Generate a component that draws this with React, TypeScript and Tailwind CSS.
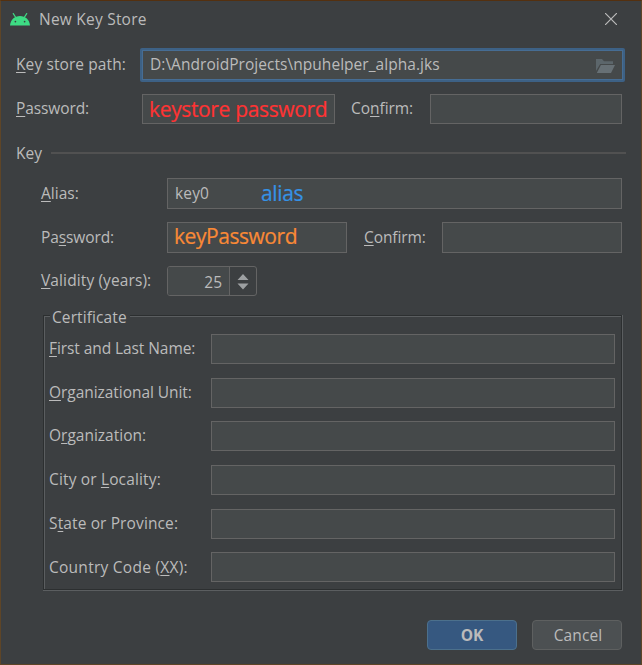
import type { ReactNode } from "react";

function Label({ className = "", children }: { className?: string; children: ReactNode }) {
  return <div className={`h-5 shrink-0 whitespace-pre text-[15.5px] leading-5 ${className}`}>{children}</div>;
}

function M({ children }: { children: ReactNode }) {
  return (
    <span className="underline decoration-1 underline-offset-2 [text-decoration-skip-ink:none]">{children}</span>
  );
}

function Field({ className = "", children }: { className?: string; children?: ReactNode }) {
  return <div className={`flex shrink-0 border border-[#646464] bg-[#45494a] ${className}`}>{children}</div>;
}

function Note({ className = "", children }: { className?: string; children: ReactNode }) {
  return (
    <span className={`whitespace-pre text-[21px] [-webkit-text-stroke:0.2px_currentColor] ${className}`}>
      {children}
    </span>
  );
}

function AndroidIcon() {
  return (
    <svg width="20" height="13" viewBox="0 0 20 13" className="shrink-0">
      <path d="M5.600 4.200 3.300.6M14.400 4.200 16.700.6" stroke="#3ddc84" strokeWidth="1.200" strokeLinecap="round" />
      <path d="M0 12.600C.5 6.600 4.600 3 10 3s9.500 3.600 10 9.600z" fill="#3ddc84" />
      <circle cx="5.400" cy="8.600" r=".85" fill="#3c3f41" />
      <circle cx="14.600" cy="8.600" r=".85" fill="#3c3f41" />
    </svg>
  );
}

function FolderIcon() {
  return (
    <svg width="19" height="14" viewBox="0 0 19 14" className="shrink-0">
      <path d="M0 0h6l2 2.300h9V5H4.200L0 12z" fill="#5c666b" />
      <path d="M4.900 6H19l-4 8H.8z" fill="#677075" />
    </svg>
  );
}

export default function App() {
  return (
    <div className="flex h-[665px] w-[642px] flex-col overflow-hidden border border-[#5e4527] border-t-[#54300f] bg-[#3c3f41] font-['Open_Sans','Noto_Sans',sans-serif] text-[#bbbbbb]">
      <header className="flex h-[47px] shrink-0 pl-[9px]">
        <div className="pt-3">
          <AndroidIcon />
        </div>
        <Label className="ml-[9px] mt-2 tracking-[0.22px]">New Key Store</Label>
        <svg width="12" height="12" viewBox="0 0 12 12" className="ml-auto mr-[24px] mt-3">
          <path d="M0 0 12 12M12 0 0 12" stroke="#bbbbbb" strokeWidth="1.200" />
        </svg>
      </header>

      <div className="flex h-[34px] shrink-0 pl-[15px]">
        <Label className="mt-[6px] w-[124px] tracking-[0.1px]">
          <M>K</M>ey store path:
        </Label>
        <div className="h-[34px] w-[485px] rounded-[2px] bg-[#3d6185] p-[2px]">
          <div className="flex h-[30px] border border-[#466d94] bg-[#45494a] pl-[7px]">
            <Label className="mt-[3px] tracking-[0.04px]">D:\AndroidProjects\npuhelper_alpha.jks</Label>
            <div className="ml-auto mr-[7px] mt-2">
              <FolderIcon />
            </div>
          </div>
        </div>
      </div>

      <div className="mt-3 flex h-[30px] shrink-0 pl-[15px]">
        <Label className="mt-1 w-[126px] tracking-[-0.1px]">
          <M>P</M>assword:
        </Label>
        <Field className="h-[30px] w-[193px] pl-[6px]">
          <Note className="leading-[29px] tracking-[-0.35px] text-[#ff3333]">keystore password</Note>
        </Field>
        <Label className="ml-4 mt-1 w-[79px] tracking-[-0.05px]">
          Co<M>n</M>firm:
        </Label>
        <Field className="h-[30px] w-[192px]" />
      </div>

      <div className="mt-[19px] flex h-5 shrink-0 pl-[15px]">
        <Label className="w-[35px]">Key</Label>
        <div className="mt-[9px] h-[2px] w-[575px] bg-[#515151]" />
      </div>

      <div className="mt-[15px] flex h-[31px] shrink-0 pl-10">
        <Label className="mt-[5px] w-[126px]">
          <M>A</M>lias:
        </Label>
        <Field className="h-[31px] w-[455px] pl-[7px]">
          <Label className="mt-1 w-[86px] tracking-[0.15px]">key0</Label>
          <Note className="leading-[29px] tracking-[-0.35px] text-[#3592e6]">alias</Note>
        </Field>
      </div>

      <div className="mt-[13px] flex h-[31px] shrink-0 pl-10">
        <Label className="mt-[5px] w-[126px] tracking-[-0.1px]">
          Pa<M>s</M>sword:
        </Label>
        <Field className="h-[31px] w-[180px] pl-[6px]">
          <Note className="leading-[26px] tracking-[-0.45px] text-[#fa8936]">keyPassword</Note>
        </Field>
        <Label className="ml-[17px] mt-[5px] w-[78px] tracking-[-0.1px]">
          <M>C</M>onfirm:
        </Label>
        <Field className="h-[31px] w-[180px]" />
      </div>

      <div className="mt-[13px] flex h-[30px] shrink-0 pl-10">
        <Label className="mt-1 w-[126px] tracking-[0.11px]">
          <M>V</M>alidity (years):
        </Label>
        <div className="flex h-[30px] w-[90px] overflow-hidden rounded-[3px] border border-[#646464]">
          <div className="flex w-[62px] justify-end border-r border-[#646464] bg-[#45494a] pr-[7px]">
            <Label className="mt-[5px]">25</Label>
          </div>
          <svg width="26" height="28" viewBox="0 0 26 28">
            <path d="M7.500 13 13 7l5.500 6zM7.500 16.500h11L13 22.500z" fill="#9da0a2" />
          </svg>
        </div>
      </div>

      <div className="mt-[10px] flex h-5 shrink-0 pl-[42px]">
        <div className="mt-[9px] h-[11px] w-[7px] border-l border-t border-[#2c2f30]">
          <div className="h-[10px] border-l border-t border-[#5b5e60]" />
        </div>
        <Label className="ml-[2px] mt-px w-[78px] tracking-[0.1px]">Certificate</Label>
        <div className="mt-[9px] h-[11px] w-[492px] border-r border-t border-[#2c2f30]">
          <div className="h-[10px] border-t border-[#5b5e60]" />
        </div>
        <div className="mt-[9px] h-[11px] w-px bg-[#5b5e60]" />
      </div>
      <div className="ml-[42px] h-[265px] w-[580px] shrink-0 border-b border-r border-[#5b5e60]">
        <div className="h-[264px] border-x border-b border-[#2c2f30]">
          <div className="flex h-[263px] flex-col gap-[13.700px] border-l border-[#5b5e60] pl-1 pt-2">
            <div className="flex h-[30px] shrink-0">
              <Label className="mt-1 w-[162px] tracking-[-0.08px]">
                <M>F</M>irst and Last Name:
              </Label>
              <Field className="w-[404px]" />
            </div>
            <div className="flex h-[30px] shrink-0">
              <Label className="mt-1 w-[162px] tracking-[-0.05px]">
                <M>O</M>rganizational Unit:
              </Label>
              <Field className="w-[404px]" />
            </div>
            <div className="flex h-[30px] shrink-0">
              <Label className="mt-1 w-[162px]">
                O<M>r</M>ganization:
              </Label>
              <Field className="w-[404px]" />
            </div>
            <div className="flex h-[30px] shrink-0">
              <Label className="mt-1 w-[162px] tracking-[0.15px]">
                City or <M>L</M>ocality:
              </Label>
              <Field className="w-[404px]" />
            </div>
            <div className="flex h-[30px] shrink-0">
              <Label className="mt-1 w-[162px] tracking-[0.12px]">
                S<M>t</M>ate or Province:
              </Label>
              <Field className="w-[404px]" />
            </div>
            <div className="flex h-[30px] shrink-0">
              <Label className="mt-[5px] w-[162px] tracking-[0.26px]">
                Country Code (<M>X</M>X):
              </Label>
              <Field className="w-[404px]" />
            </div>
          </div>
        </div>
      </div>

      <footer className="mt-[29px] flex h-[30px] shrink-0 justify-end gap-[15px] pr-[19px]">
        <button className="flex w-[90px] justify-center rounded-[4px] border border-[#4c708c] bg-[#365880]">
          <Label className="mt-1 font-bold">OK</Label>
        </button>
        <button className="flex w-[90px] justify-center rounded-[4px] border border-[#5e6060] bg-[#4c5052] pl-[2px]">
          <Label className="mt-1 tracking-[0.1px]">Cancel</Label>
        </button>
      </footer>
    </div>
  );
}
